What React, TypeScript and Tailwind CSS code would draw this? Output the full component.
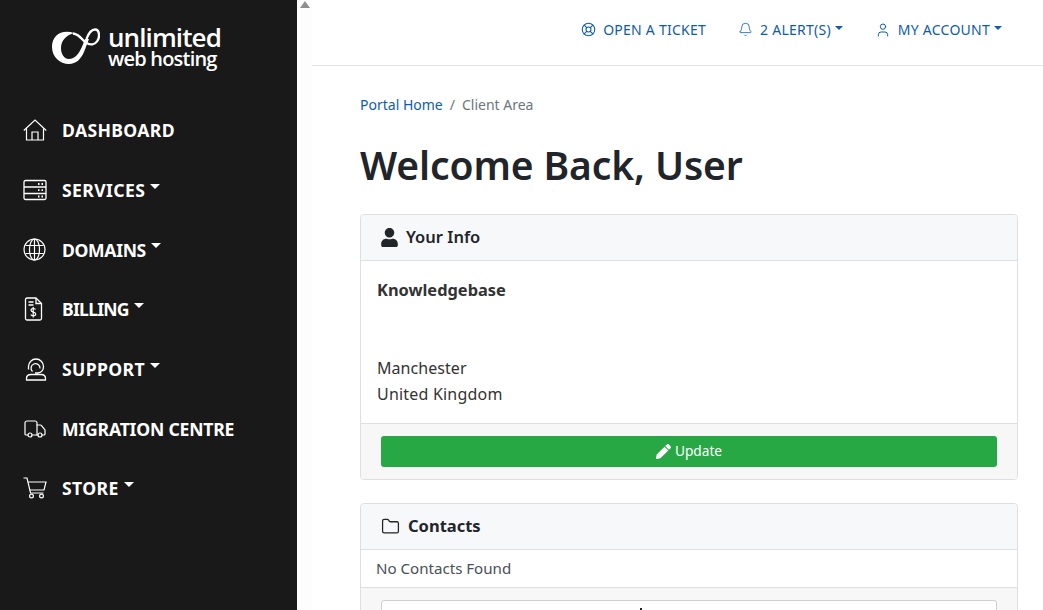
import type { ReactNode } from 'react';
import { Bell, Folder, LifeBuoy, Truck, User } from 'lucide-react';

const font = 'font-["Noto_Sans","Liberation_Sans",sans-serif]';

const Caret = () => (
  <span className="ml-[5px] inline-block h-0 w-0 -translate-y-[4px] border-x-[5px] border-t-[5px] border-x-transparent border-t-current align-middle" />
);

const HouseIcon = () => (
  <svg width="24" height="22" viewBox="0 0 24 22" fill="none" stroke="currentColor" strokeWidth="1.2">
    <path d="M.8 11.500 12 1l11.200 10.500" />
    <path d="M3.500 9.500V21h17V9.500" />
    <path d="M9 21v-8h6v8" />
  </svg>
);

const ServerIcon = () => (
  <svg width="24" height="22" viewBox="0 0 24 22" fill="none" stroke="currentColor" strokeWidth="1.3">
    <rect x="1" y="1.500" width="22" height="19" rx="1.500" />
    <path d="M1 8h22M1 14.500h22" />
    <path d="M15 5h1.500M18.500 5H20M15 11.200h1.500M18.500 11.200H20M15 17.500h1.500M18.500 17.500H20" strokeWidth="1.800" />
  </svg>
);

const GlobeIcon = () => (
  <svg width="23" height="23" viewBox="0 0 23 23" fill="none" stroke="currentColor" strokeWidth="1.200">
    <circle cx="11.500" cy="11.500" r="10.500" />
    <ellipse cx="11.500" cy="11.500" rx="5" ry="10.500" />
    <path d="M11.500 1v21M2.500 7.500h18M2.500 15.500h18" />
  </svg>
);

const InvoiceIcon = () => (
  <svg width="20" height="24" viewBox="0 0 20 24" fill="none" stroke="currentColor" strokeWidth="1.300">
    <path d="M4 1h9l5.500 5.500V21.500a1.500 1.500 0 0 1-1.500 1.500H4a1.500 1.500 0 0 1-1.500-1.500v-19A1.500 1.500 0 0 1 4 1z" />
    <path d="M13 1v5.500h5.500M5.500 5h5M5.500 8h5" />
    <path d="M12.500 12.500c-.5-.8-1.300-1-2.300-1-1.300 0-2.200.7-2.200 1.800 0 2.500 4.700 1.200 4.700 3.700 0 1.100-1 1.800-2.400 1.800-1.100 0-2-.4-2.500-1.200M10.200 10v10.500" strokeWidth="1.200" />
  </svg>
);

const AgentIcon = () => (
  <svg width="22" height="23" viewBox="0 0 22 23" fill="none" stroke="currentColor" strokeWidth="1.300" className="ml-[2px]">
    <path d="M3.500 11.500V8.500a7.500 7.500 0 0 1 15 0c0 3.500-2 6-5.500 6.500h-3" />
    <path d="M7.500 13.500a4.500 4.500 0 1 1 7.500-3" />
    <path d="M1.500 22v-1.500c0-2.500 2-4 4.500-4h10c2.500 0 4.500 1.500 4.500 4V22z" />
  </svg>
);

const CartIcon = () => (
  <svg width="24" height="22" viewBox="0 0 24 22" fill="none" stroke="currentColor" strokeWidth="1.200">
    <path d="M.5 1H4l3.500 15h13" />
    <path d="M5 5h18l-2 8H6.800" />
    <circle cx="8.500" cy="19" r="1.900" />
    <circle cx="18.500" cy="19" r="1.900" />
  </svg>
);

const navItems: { label: string; icon: ReactNode; caret?: boolean; track: string }[] = [
  { label: 'DASHBOARD', icon: <HouseIcon />, track: 'tracking-[0.35px]' },
  { label: 'SERVICES', icon: <ServerIcon />, caret: true, track: 'tracking-[0.4px]' },
  { label: 'DOMAINS', icon: <GlobeIcon />, caret: true, track: 'tracking-[-0.35px]' },
  { label: 'BILLING', icon: <InvoiceIcon />, caret: true, track: 'tracking-[-0.75px]' },
  { label: 'SUPPORT', icon: <AgentIcon />, caret: true, track: 'tracking-[0.35px]' },
  { label: 'MIGRATION CENTRE', icon: <Truck size={24} strokeWidth={1.2} />, track: 'tracking-[-0.2px]' },
  { label: 'STORE', icon: <CartIcon />, caret: true, track: 'tracking-[0.4px]' },
];

const Logo = () => (
  <div className="flex items-start gap-[8px] pl-[52px] text-white">
    <svg width="48" height="37" viewBox="0 0 48 37" fill="none" className="mt-[3px] shrink-0">
      <path
        d="M22 5C10 1 0 7 0 19c0 10 8 17 17 17 7 0 12-5 15-12l5-13h-4c-3 8-7 20-16 20-5 0-8-5-8-11 0-8 6-13 13-15z"
        fill="white"
      />
      <path
        d="M21 5.500c4 .5 7 3 10 6.500 3 3.500 6 4.800 9.500 4.300C44 15.800 47 12 47 7.500 47 4 45.500 1.500 43 1.500c-3 0-6.500 4-8.500 9.500"
        stroke="white"
        strokeWidth="2.300"
      />
    </svg>
    <div className="mt-[1px] flex flex-col font-['Open_Sans',sans-serif] font-semibold">
      <span className="h-[23px] text-[26px] leading-[23px] tracking-[-0.9px]">unlimited</span>
      <span className="h-[20px] text-[20px] leading-[20px] tracking-[-0.8px]">web hosting</span>
    </div>
  </div>
);

const Sidebar = () => (
  <aside className="flex w-[297px] shrink-0 flex-col bg-[#191919] text-white">
    <div className="h-[100.500px] pt-[25px]">
      <Logo />
    </div>
    <nav className="flex flex-col">
      {navItems.map((item) => (
        <a key={item.label} className="flex h-[59.700px] items-center pl-[23px]">
          <span className="flex w-[39px] shrink-0 items-center justify-start">{item.icon}</span>
          <span className={`text-[17.600px] font-bold ${item.track}`}>{item.label}</span>
          {item.caret && <Caret />}
        </a>
      ))}
    </nav>
  </aside>
);

const TopLink = ({ icon, label, caret }: { icon: ReactNode; label: string; caret?: boolean }) => (
  <a className="flex items-center gap-[7px] text-[14px] tracking-[0.25px] text-[#0e5cad]">
    {icon}
    <span>
      {label}
      {caret && <span className="ml-[4px] inline-block h-0 w-0 -translate-y-[3px] border-x-[4.500px] border-t-[4.500px] border-x-transparent border-t-current align-middle" />}
    </span>
  </a>
);

const Card = ({ children }: { children: ReactNode }) => (
  <section className="rounded-[4px] border border-[#dfdfdf] bg-white">{children}</section>
);

export default function App() {
  return (
    <div className={`flex h-[610px] w-[1043px] overflow-hidden bg-white text-[#212529] ${font}`}>
      <Sidebar />

      {/* scrollbar strip */}
      <div className="w-[15px] shrink-0 bg-[#fdfdfd] pt-[1px]">
        <div className="mx-auto h-0 w-0 border-x-[5px] border-b-[7px] border-x-transparent border-b-[#8f8f8f]" />
      </div>

      <main className="flex min-w-0 flex-1 flex-col">
        <header className="flex h-[66px] shrink-0 items-center justify-end gap-[32px] border-b border-[#e3e3e3] pr-[41px] pb-[6px]">
          <TopLink icon={<LifeBuoy size={15} strokeWidth={1.700} />} label="OPEN A TICKET" />
          <TopLink icon={<Bell size={15} strokeWidth={1.300} />} label="2 ALERT(S)" caret />
          <TopLink icon={<User size={16} strokeWidth={1.500} />} label="MY ACCOUNT" caret />
        </header>

        <div className="flex flex-col pt-[30px] pr-[25px] pl-[48px]">
          <div className="flex items-center text-[14px] leading-[18px]">
            <a className="text-[#0e5cad]">Portal Home</a>
            <span className="px-[7px] text-[#6c757d]">/</span>
            <span className="text-[#6c757d]">Client Area</span>
          </div>

          <h1 className="mt-[27px] text-[39px] leading-[48px] font-semibold tracking-[-0.1px]">Welcome Back, User</h1>

          <div className="mt-[25px]">
            <Card>
              <div className="flex h-[46px] items-center gap-[8px] rounded-t-[4px] border-b border-[#dfdfdf] bg-[#f7f8fa] pl-[20px]">
                <svg width="17" height="19" viewBox="0 0 448 512" fill="currentColor">
                  <path d="M224 256c70.700 0 128-57.300 128-128S294.700 0 224 0 96 57.300 96 128s57.300 128 128 128zm89.600 32h-16.700c-22.200 10.200-46.900 16-72.900 16s-50.600-5.800-72.900-16h-16.700C60.200 288 0 348.200 0 422.400V464c0 26.500 21.500 48 48 48h352c26.500 0 48-21.500 48-48v-41.600c0-74.200-60.200-134.400-134.400-134.400z" />
                </svg>
                <h3 className="text-[16.500px] font-semibold">Your Info</h3>
              </div>
              <div className="h-[162px] px-[16px] pt-[16px] text-[16px] leading-[26px] text-[#333]">
                <p className="text-[16.400px] font-bold">Knowledgebase</p>
                <p className="mt-[52px] tracking-[0.05px]">Manchester</p>
                <p className="tracking-[0.2px]">United Kingdom</p>
              </div>
              <div className="rounded-b-[4px] border-t border-[#dfdfdf] bg-[#f7f7f7] px-[20px] py-[12px]">
                <button className="flex h-[31px] w-full items-center justify-center gap-[4px] rounded-[3px] bg-[#28a745] text-[13.700px] text-white">
                  <svg width="15" height="15" viewBox="0 0 512 512" fill="currentColor">
                    <path d="M497.900 142.100l-46.100 46.100c-4.700 4.700-12.300 4.700-17 0l-111-111c-4.700-4.700-4.700-12.300 0-17l46.100-46.100c18.700-18.700 49.100-18.700 67.900 0l60.100 60.100c18.800 18.700 18.800 49.100 0 67.900zM284.200 99.800L21.600 362.400.4 483.900c-2.900 16.400 11.400 30.600 27.800 27.800l121.500-21.300 262.600-262.600c4.700-4.700 4.700-12.300 0-17l-111-111c-4.800-4.700-12.400-4.700-17.100 0z" />
                  </svg>
                  Update
                </button>
              </div>
            </Card>
          </div>

          <div className="mt-[23px]">
            <Card>
              <div className="flex h-[46px] items-center gap-[8px] rounded-t-[4px] border-b border-[#dfdfdf] bg-[#f7f8fa] pl-[20px]">
                <Folder size={19} strokeWidth={1.600} />
                <h3 className="text-[16.500px] font-bold">Contacts</h3>
              </div>
              <div className="h-[37px] px-[15px] text-[15.100px] leading-[36px] text-[#495057]">No Contacts Found</div>
              <div className="border-t border-[#dfdfdf] bg-[#f7f7f7] px-[20px] py-[12px]">
                <div className="flex h-[31px] justify-center rounded-[3px] border border-[#cfcfcf] bg-white pt-[7px] pr-[96px] text-[#212529]">
                  <svg width="12" height="12" viewBox="0 0 12 12" fill="currentColor" className="shrink-0">
                    <path d="M5 0h2v5h5v2H7v5H5V7H0V5h5z" />
                  </svg>
                </div>
              </div>
            </Card>
          </div>
        </div>
      </main>
    </div>
  );
}
